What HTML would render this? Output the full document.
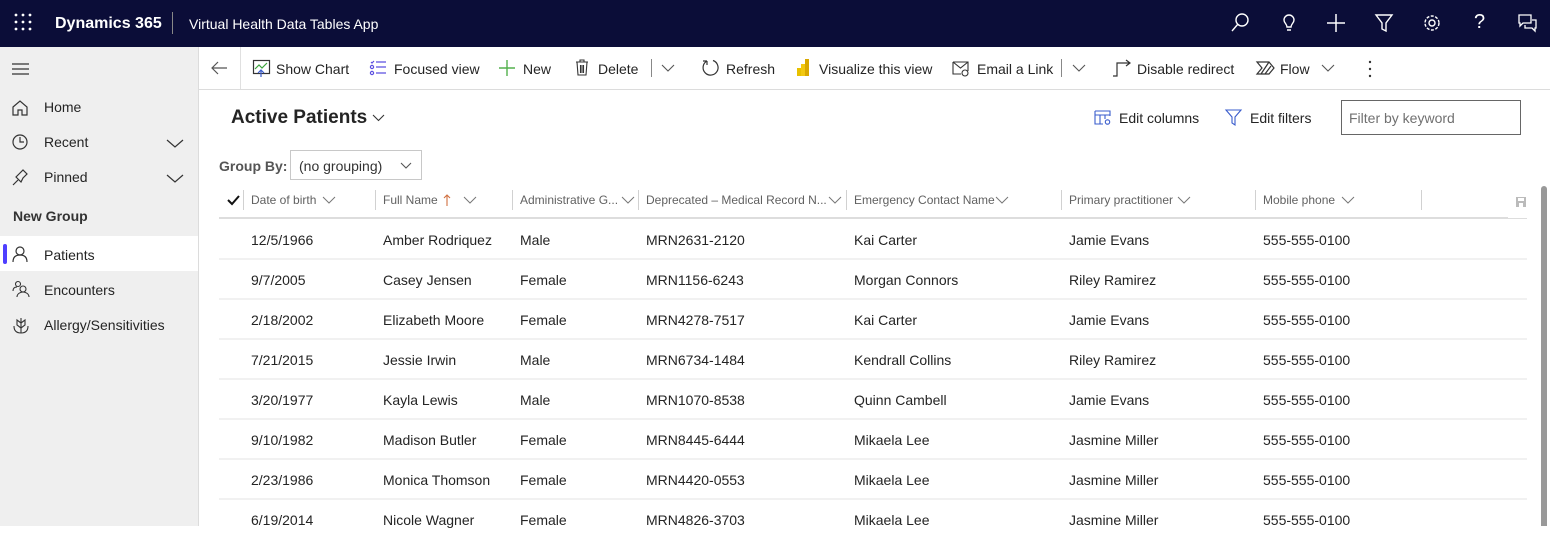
<!DOCTYPE html>
<html><head><meta charset="utf-8"><style>
*{box-sizing:border-box;margin:0;padding:0}
body{width:1550px;height:526px;overflow:hidden;font-family:"Liberation Sans",sans-serif;color:#242424;background:#fff;position:relative}
.top{position:absolute;left:0;top:0;width:1550px;height:47px;background:#0b0d38;color:#fff}
.abs{position:absolute;white-space:nowrap}
svg{position:absolute;overflow:visible}
.side{position:absolute;left:0;top:47px;width:199px;height:479px;background:#efefef;border-right:1px solid #dcdcdc}
.side .it{position:absolute;left:44px;font-size:14px;color:#242424}
.cmd{font-size:14px;color:#242424}
.hd{font-size:12px;color:#616161}
.cell{font-size:14px;color:#242424}
.vd{position:absolute;top:190px;width:1px;height:20px;background:#d1d1d1}
.rl{position:absolute;left:219px;width:1308px;height:2px;background:#f1f1f1}
.ch{fill:none;stroke:#777;stroke-width:1}
</style></head><body>
<div class="top">
<svg width="20" height="20" style="left:14px;top:13px"><g fill="#fff"><circle cx="2" cy="2" r="1.4"/><circle cx="9" cy="2" r="1.4"/><circle cx="16" cy="2" r="1.4"/><circle cx="2" cy="9" r="1.4"/><circle cx="9" cy="9" r="1.4"/><circle cx="16" cy="9" r="1.4"/><circle cx="2" cy="16" r="1.4"/><circle cx="9" cy="16" r="1.4"/><circle cx="16" cy="16" r="1.4"/></g></svg>
<div class="abs" style="left:55px;top:15px;font-size:16px;font-weight:bold">Dynamics 365</div>
<div class="abs" style="left:172px;top:12px;width:1px;height:22px;background:#888"></div>
<div class="abs" style="left:189px;top:16px;font-size:14px">Virtual Health Data Tables App</div>
<svg width="20" height="20" style="left:1231px;top:13px" fill="none" stroke="#fff" stroke-width="1.4"><circle cx="11" cy="7" r="6"/><path d="M7 11L1 18"/></svg>
<svg width="20" height="20" style="left:1280px;top:13px" fill="none" stroke="#fff" stroke-width="1.4"><path d="M4 7a5 5 0 1 1 10 0c0 3-3 4-3 7H7c0-3-3-4-3-7zM7 17h4"/></svg>
<svg width="20" height="20" style="left:1326px;top:13px" fill="none" stroke="#fff" stroke-width="1.5"><path d="M10 1v18M1 10h18"/></svg>
<svg width="20" height="20" style="left:1375px;top:14px" fill="none" stroke="#fff" stroke-width="1.4"><path d="M1 1h16l-6 8v8l-4-2V9z"/></svg>
<svg width="20" height="20" style="left:1423px;top:13px" fill="none" stroke="#fff" stroke-width="1.4"><circle cx="9" cy="10" r="3"/><circle cx="9" cy="10" r="7" stroke-dasharray="3 1.5"/></svg>
<div class="abs" style="left:1474px;top:11px;font-size:20px;color:#fff">?</div>
<svg width="20" height="20" style="left:1518px;top:14px" fill="none" stroke="#fff" stroke-width="1.3"><path d="M1 1h12v8H5l-3 3V9H1zM7 11v3h7l3 3v-3h1V6h-4"/></svg>
</div>

<div class="side">
<svg width="18" height="14" style="left:12px;top:16px" stroke="#333" stroke-width="1.3"><path d="M0 1h17M0 6h17M0 11h17"/></svg>
<svg width="18" height="18" style="left:12px;top:52px" fill="none" stroke="#333" stroke-width="1.2"><path d="M1 8l7-6 7 6v8H10v-5H6v5H1z"/></svg>
<div class="it" style="top:52px">Home</div>
<svg width="18" height="18" style="left:12px;top:87px" fill="none" stroke="#333" stroke-width="1.2"><circle cx="8" cy="8" r="7"/><path d="M8 3v5h4"/></svg>
<div class="it" style="top:87px">Recent</div>
<svg width="18" height="10" style="left:167px;top:92px" fill="none" stroke="#333" stroke-width="1.2"><path d="M0 1l8 7 8-7"/></svg>
<svg width="18" height="18" style="left:12px;top:122px" fill="none" stroke="#333" stroke-width="1.2"><path d="M1 16l5-5M4 8l5 5 2-4 4-4-4-4-4 4z"/></svg>
<div class="it" style="top:122px">Pinned</div>
<svg width="18" height="10" style="left:167px;top:127px" fill="none" stroke="#333" stroke-width="1.2"><path d="M0 1l8 7 8-7"/></svg>
<div class="abs" style="left:13px;top:161px;font-size:14px;font-weight:bold;color:#333">New Group</div>
<div class="abs" style="left:0;top:189px;width:198px;height:35px;background:#fff"></div>
<div class="abs" style="left:3px;top:197px;width:4px;height:20px;background:#4f3fff;border-radius:2px"></div>
<svg width="18" height="18" style="left:13px;top:199px" fill="none" stroke="#333" stroke-width="1.2"><circle cx="7" cy="5" r="4"/><path d="M0 16c0-5 3-7 7-7s7 2 7 7"/></svg>
<div class="it" style="top:200px">Patients</div>
<svg width="18" height="18" style="left:13px;top:234px" fill="none" stroke="#333" stroke-width="1.1"><circle cx="5" cy="3" r="2.5"/><circle cx="10" cy="8" r="3"/><path d="M0 10c0-3 2-4 4-4M4 16c0-3 3-5 6-5s6 2 6 5"/></svg>
<div class="it" style="top:235px">Encounters</div>
<svg width="18" height="18" style="left:13px;top:270px" fill="none" stroke="#333" stroke-width="1.1"><path d="M8 1v15M8 6l-4-3v5l4 3M8 6l4-3v5l-4 3M1 9c0 5 3 7 7 7s7-2 7-7"/></svg>
<div class="it" style="top:270px">Allergy/Sensitivities</div>
</div>

<!-- command bar -->
<div class="abs" style="left:199px;top:89px;width:1351px;height:1px;background:#dcdcdc"></div>
<div class="abs" style="left:240px;top:47px;width:1px;height:42px;background:#e0e0e0"></div>
<svg width="18" height="14" style="left:211px;top:61px" fill="none" stroke="#555" stroke-width="1.2"><path d="M16 7H1M7 1L1 7l6 6"/></svg>
<svg width="18" height="18" style="left:253px;top:60px" fill="none" stroke-width="1.2"><rect x="0.5" y="0.5" width="16" height="13" stroke="#333"/><path d="M2 9l4-4 3 3 5-5" stroke="#3aa23a"/><path d="M8 17V10M5 13l3-3 3 3" stroke="#3a5ccc"/></svg>
<div class="abs cmd" style="left:276px;top:61px">Show Chart</div>
<svg width="18" height="16" style="left:370px;top:60px" fill="none" stroke="#5b4fe0" stroke-width="1.2"><circle cx="2" cy="7" r="1.6"/><circle cx="2" cy="13" r="1.6"/><path d="M1 2l1 1 2-2M6 2h10M6 7h10M6 13h10"/></svg>
<div class="abs cmd" style="left:394px;top:61px">Focused view</div>
<svg width="18" height="18" style="left:499px;top:60px" stroke="#53b04d" stroke-width="1.4"><path d="M8 0v16M0 8h16"/></svg>
<div class="abs cmd" style="left:523px;top:61px">New</div>
<svg width="16" height="18" style="left:575px;top:59px" fill="none" stroke="#333" stroke-width="1.1"><path d="M1 3h12M5 3V1h4v2M2 3l1 13h8l1-13M5.5 6v8M7 6v8M8.5 6v8"/></svg>
<div class="abs cmd" style="left:598px;top:61px">Delete</div>
<div class="abs" style="left:651px;top:59px;width:1px;height:18px;background:#888"></div>
<svg width="14" height="8" style="left:662px;top:65px" fill="none" stroke="#555" stroke-width="1.1"><path d="M0 0l6 6 6-6"/></svg>
<svg width="18" height="18" style="left:702px;top:59px" fill="none" stroke="#333" stroke-width="1.2"><path d="M5 2A7.5 7.5 0 1 0 11 1.5M5 2V6M5 2H1"/></svg>
<div class="abs cmd" style="left:726px;top:61px">Refresh</div>
<svg width="14" height="18" style="left:797px;top:59px"><rect x="0" y="9" width="4" height="8" fill="#e8c100"/><rect x="4" y="5" width="4" height="12" fill="#f2c811"/><rect x="8" y="0" width="4" height="17" fill="#d9a800"/></svg>
<div class="abs cmd" style="left:819px;top:61px">Visualize this view</div>
<svg width="18" height="16" style="left:952px;top:61px" fill="none" stroke="#333" stroke-width="1.1"><path d="M1 1h15v9M1 1v12h8M1 1l7.5 6L16 1"/><circle cx="13" cy="12" r="3"/></svg>
<div class="abs cmd" style="left:977px;top:61px">Email a Link</div>
<div class="abs" style="left:1061px;top:59px;width:1px;height:18px;background:#888"></div>
<svg width="14" height="8" style="left:1073px;top:65px" fill="none" stroke="#555" stroke-width="1.1"><path d="M0 0l6 6 6-6"/></svg>
<svg width="18" height="18" style="left:1113px;top:60px" fill="none" stroke="#333" stroke-width="1.2"><path d="M0 16h4V3h13M13 0l4 3-4 3"/></svg>
<div class="abs cmd" style="left:1137px;top:61px">Disable redirect</div>
<svg width="20" height="16" style="left:1256px;top:61px" fill="none" stroke="#333" stroke-width="1.2"><path d="M1 1h12l5 6-5 6H1l5-6zM5 13l8-12M9 13l6-8"/></svg>
<div class="abs cmd" style="left:1280px;top:61px">Flow</div>
<svg width="14" height="8" style="left:1322px;top:65px" fill="none" stroke="#555" stroke-width="1.1"><path d="M0 0l6 6 6-6"/></svg>
<svg width="4" height="18" style="left:1368px;top:60px" fill="#333"><circle cx="2" cy="2" r="1.2"/><circle cx="2" cy="9" r="1.2"/><circle cx="2" cy="16" r="1.2"/></svg>

<!-- view header -->
<div class="abs" style="left:231px;top:107px;font-size:19px;font-weight:bold;color:#242424">Active Patients</div>
<svg width="12" height="8" style="left:373px;top:115px" fill="none" stroke="#333" stroke-width="1.1"><path d="M0 0l5.5 5.5L11 0"/></svg>
<svg width="18" height="16" style="left:1094px;top:110px" fill="none" stroke="#3a5ccc" stroke-width="1.1"><path d="M1 1h15v5M1 1v13h8M1 5h15M6 5v9M11 5v4"/><circle cx="13.5" cy="12" r="2.2"/></svg>
<div class="abs cmd" style="left:1119px;top:110px">Edit columns</div>
<svg width="18" height="18" style="left:1225px;top:109px" fill="none" stroke="#3a5ccc" stroke-width="1.1"><path d="M1 1h15l-6 7v8l-3-2V8z"/></svg>
<div class="abs cmd" style="left:1250px;top:110px">Edit filters</div>
<div class="abs" style="left:1341px;top:100px;width:180px;height:35px;border:1px solid #666"></div>
<div class="abs" style="left:1349px;top:110px;font-size:14px;color:#707070">Filter by keyword</div>

<div class="abs" style="left:219px;top:158px;font-size:14px;font-weight:bold;color:#555">Group By:</div>
<div class="abs" style="left:290px;top:150px;width:132px;height:30px;border:1px solid #c8c8c8"></div>
<div class="abs" style="left:299px;top:158px;font-size:14px;color:#333">(no grouping)</div>
<svg width="12" height="8" style="left:401px;top:163px" fill="none" stroke="#555" stroke-width="1.1"><path d="M0 0l5 5 5-5"/></svg>

<!-- grid header -->
<svg width="14" height="12" style="left:227px;top:194px" fill="none" stroke="#111" stroke-width="2"><path d="M1 6l4 4 7-8"/></svg>
<div class="vd" style="left:243px"></div><div class="vd" style="left:375px"></div><div class="vd" style="left:512px"></div><div class="vd" style="left:638px"></div><div class="vd" style="left:846px"></div><div class="vd" style="left:1061px"></div><div class="vd" style="left:1255px"></div><div class="vd" style="left:1421px"></div>
<div class="abs hd" style="left:251px;top:193px">Date of birth</div>
<svg width="12" height="7" style="left:323px;top:197px"><path class="ch" d="M0 0l6 6 6-6"/></svg>
<div class="abs hd" style="left:383px;top:193px">Full Name</div>
<svg width="8" height="12" style="left:443px;top:194px" fill="none" stroke="#d07040" stroke-width="1.1"><path d="M4 12V1M1 4l3-3 3 3"/></svg>
<svg width="12" height="7" style="left:464px;top:197px"><path class="ch" d="M0 0l6 6 6-6"/></svg>
<div class="abs hd" style="left:520px;top:193px">Administrative G...</div>
<svg width="12" height="7" style="left:622px;top:197px"><path class="ch" d="M0 0l6 6 6-6"/></svg>
<div class="abs hd" style="left:646px;top:193px">Deprecated – Medical Record N...</div>
<svg width="12" height="7" style="left:829px;top:197px"><path class="ch" d="M0 0l6 6 6-6"/></svg>
<div class="abs hd" style="left:854px;top:193px">Emergency Contact Name</div>
<svg width="12" height="7" style="left:996px;top:197px"><path class="ch" d="M0 0l6 6 6-6"/></svg>
<div class="abs hd" style="left:1069px;top:193px">Primary practitioner</div>
<svg width="12" height="7" style="left:1178px;top:197px"><path class="ch" d="M0 0l6 6 6-6"/></svg>
<div class="abs hd" style="left:1263px;top:193px">Mobile phone</div>
<svg width="12" height="7" style="left:1342px;top:197px"><path class="ch" d="M0 0l6 6 6-6"/></svg>
<svg width="12" height="12" style="left:1516px;top:197px"><rect x="0" y="0" width="10" height="10" fill="#bbb"/><rect x="2" y="1" width="6" height="3" fill="#fff"/><rect x="3" y="6" width="4" height="4" fill="#fff"/></svg>
<div class="abs" style="left:219px;top:217px;width:1289px;height:2px;background:#ddd"></div>
<div class="abs" style="left:1508px;top:218px;width:19px;height:1px;background:#ddd"></div>
<div class="abs" style="left:1541px;top:186px;width:6px;height:340px;background:#999;border-radius:3px 3px 0 0"></div>

<div class="rl" style="top:258px"></div><div class="rl" style="top:298px"></div><div class="rl" style="top:338px"></div><div class="rl" style="top:378px"></div><div class="rl" style="top:418px"></div><div class="rl" style="top:458px"></div><div class="rl" style="top:498px"></div>

<div class="abs cell" style="left:251px;top:220px;line-height:40px">12/5/1966<br>9/7/2005<br>2/18/2002<br>7/21/2015<br>3/20/1977<br>9/10/1982<br>2/23/1986<br>6/19/2014</div>
<div class="abs cell" style="left:383px;top:220px;line-height:40px">Amber Rodriquez<br>Casey Jensen<br>Elizabeth Moore<br>Jessie Irwin<br>Kayla Lewis<br>Madison Butler<br>Monica Thomson<br>Nicole Wagner</div>
<div class="abs cell" style="left:520px;top:220px;line-height:40px">Male<br>Female<br>Female<br>Male<br>Male<br>Female<br>Female<br>Female</div>
<div class="abs cell" style="left:646px;top:220px;line-height:40px">MRN2631-2120<br>MRN1156-6243<br>MRN4278-7517<br>MRN6734-1484<br>MRN1070-8538<br>MRN8445-6444<br>MRN4420-0553<br>MRN4826-3703</div>
<div class="abs cell" style="left:854px;top:220px;line-height:40px">Kai Carter<br>Morgan Connors<br>Kai Carter<br>Kendrall Collins<br>Quinn Cambell<br>Mikaela Lee<br>Mikaela Lee<br>Mikaela Lee</div>
<div class="abs cell" style="left:1069px;top:220px;line-height:40px">Jamie Evans<br>Riley Ramirez<br>Jamie Evans<br>Riley Ramirez<br>Jamie Evans<br>Jasmine Miller<br>Jasmine Miller<br>Jasmine Miller</div>
<div class="abs cell" style="left:1263px;top:220px;line-height:40px">555-555-0100<br>555-555-0100<br>555-555-0100<br>555-555-0100<br>555-555-0100<br>555-555-0100<br>555-555-0100<br>555-555-0100</div>
</body></html>
